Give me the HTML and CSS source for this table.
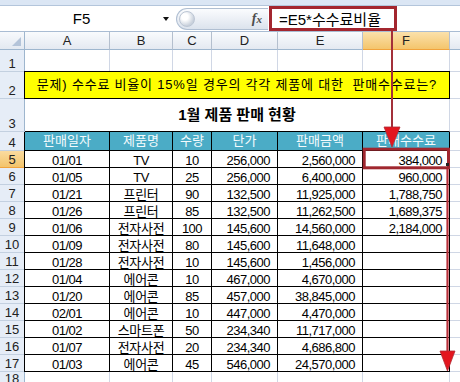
FILE: index.html
```html
<!DOCTYPE html>
<html lang="ko">
<head>
<meta charset="utf-8">
<title>1월 제품 판매 현황</title>
<link rel="stylesheet" href="styles.css">
</head>
<body>
<div class="app">
  <div class="edge"></div>
  <div class="fbar">
    <div class="namebox"><span class="ref">F5</span><span class="dd"></span></div>
    <div class="splitter"><span class="knob"></span><span class="fx"><i>f</i><i class="x">x</i></span></div>
    <div class="finput"><span class="fbox">=E5*수수료비율</span></div>
  </div>
  <div class="sheet">
    <div class="corner"><span class="tri"></span></div>
    <div class="ch">A</div><div class="ch">B</div><div class="ch">C</div><div class="ch">D</div><div class="ch">E</div><div class="ch sel">F</div><div class="ch"></div>

    <div class="rh">1</div><div class="cell"></div><div class="cell"></div><div class="cell"></div><div class="cell"></div><div class="cell"></div><div class="cell"></div><div class="cell"></div>

    <div class="rh">2</div><div class="cell q">문제) 수수료 비율이 15%일 경우의 각각 제품에 대한 &nbsp;판매수수료는?</div><div class="cell"></div>

    <div class="rh">3</div><div class="cell title">1월 제품 판매 현황</div><div class="cell"></div>

    <div class="rh">4</div><div class="cell t hd first">판매일자</div><div class="cell t hd">제품명</div><div class="cell t hd">수량</div><div class="cell t hd">단가</div><div class="cell t hd">판매금액</div><div class="cell t hd">판매수수료</div><div class="cell"></div>

    <div class="rh sel">5</div><div class="cell t c n first">01/01</div><div class="cell t c n">TV</div><div class="cell t c n">10</div><div class="cell t r n">256,000</div><div class="cell t r n">2,560,000</div><div class="cell t r n">384,000</div><div class="cell"></div>
    <div class="rh">6</div><div class="cell t c n first">01/05</div><div class="cell t c n">TV</div><div class="cell t c n">25</div><div class="cell t r n">256,000</div><div class="cell t r n">6,400,000</div><div class="cell t r n">960,000</div><div class="cell"></div>
    <div class="rh">7</div><div class="cell t c n first">01/21</div><div class="cell t c k">프린터</div><div class="cell t c n">90</div><div class="cell t r n">132,500</div><div class="cell t r n">11,925,000</div><div class="cell t r n">1,788,750</div><div class="cell"></div>
    <div class="rh">8</div><div class="cell t c n first">01/26</div><div class="cell t c k">프린터</div><div class="cell t c n">85</div><div class="cell t r n">132,500</div><div class="cell t r n">11,262,500</div><div class="cell t r n">1,689,375</div><div class="cell"></div>
    <div class="rh">9</div><div class="cell t c n first">01/06</div><div class="cell t c k">전자사전</div><div class="cell t c n">100</div><div class="cell t r n">145,600</div><div class="cell t r n">14,560,000</div><div class="cell t r n">2,184,000</div><div class="cell"></div>
    <div class="rh">10</div><div class="cell t c n first">01/09</div><div class="cell t c k">전자사전</div><div class="cell t c n">80</div><div class="cell t r n">145,600</div><div class="cell t r n">11,648,000</div><div class="cell t r n"></div><div class="cell"></div>
    <div class="rh">11</div><div class="cell t c n first">01/28</div><div class="cell t c k">전자사전</div><div class="cell t c n">10</div><div class="cell t r n">145,600</div><div class="cell t r n">1,456,000</div><div class="cell t r n"></div><div class="cell"></div>
    <div class="rh">12</div><div class="cell t c n first">01/04</div><div class="cell t c k">에어콘</div><div class="cell t c n">10</div><div class="cell t r n">467,000</div><div class="cell t r n">4,670,000</div><div class="cell t r n"></div><div class="cell"></div>
    <div class="rh">13</div><div class="cell t c n first">01/20</div><div class="cell t c k">에어콘</div><div class="cell t c n">85</div><div class="cell t r n">457,000</div><div class="cell t r n">38,845,000</div><div class="cell t r n"></div><div class="cell"></div>
    <div class="rh">14</div><div class="cell t c n first">02/01</div><div class="cell t c k">에어콘</div><div class="cell t c n">10</div><div class="cell t r n">447,000</div><div class="cell t r n">4,470,000</div><div class="cell t r n"></div><div class="cell"></div>
    <div class="rh">15</div><div class="cell t c n first">01/02</div><div class="cell t c k">스마트폰</div><div class="cell t c n">50</div><div class="cell t r n">234,340</div><div class="cell t r n">11,717,000</div><div class="cell t r n"></div><div class="cell"></div>
    <div class="rh">16</div><div class="cell t c n first">01/07</div><div class="cell t c k">전자사전</div><div class="cell t c n">20</div><div class="cell t r n">234,340</div><div class="cell t r n">4,686,800</div><div class="cell t r n"></div><div class="cell"></div>
    <div class="rh">17</div><div class="cell t c n first">01/03</div><div class="cell t c k">에어콘</div><div class="cell t c n">45</div><div class="cell t r n">546,000</div><div class="cell t r n">24,570,000</div><div class="cell t r n"></div><div class="cell"></div>

    <div class="rh">18</div><div class="cell"></div><div class="cell"></div><div class="cell"></div><div class="cell"></div><div class="cell"></div><div class="cell"></div><div class="cell"></div>
  </div>

  <svg class="overlay" width="460" height="382" viewBox="0 0 460 382" aria-hidden="true">
    <line x1="392" y1="31" x2="392" y2="129" stroke="#a3303a" stroke-width="2"/>
    <polygon points="384,127 400,127 392,147" fill="#e3161e" stroke="#b02a33" stroke-width="0.8"/>
    <rect x="364.2" y="149.2" width="84.3" height="18.6" fill="none" stroke="#a0272f" stroke-width="3"/>
    <rect x="446" y="163" width="3" height="3" fill="#222"/>
    <line x1="447.5" y1="169" x2="447.5" y2="353" stroke="#b8303a" stroke-width="2.2"/>
    <polygon points="440,351 455,351 447.5,371" fill="#e3161e" stroke="#b02a33" stroke-width="0.8"/>
  </svg>
</div>
</body>
</html>
```

FILE: styles.css
```css
* {
  box-sizing: border-box;
  margin: 0;
  padding: 0;
}

html, body {
  width: 460px;
  height: 382px;
  overflow: hidden;
  background: #ffffff;
}

body {
  font-family: "Liberation Sans", "Noto Sans CJK KR", sans-serif;
  color: #000;
}

.app {
  position: relative;
  width: 460px;
  height: 382px;
  overflow: hidden;
}

.edge {
  height: 6px;
  background: #dbe6f4;
  border-bottom: 1px solid #b3c5db;
}

/* formula bar */
.fbar {
  display: flex;
  height: 26px;
  background: #fff;
  border-bottom: 1px solid #a9bcd3;
}

.namebox {
  width: 173px;
  display: flex;
  align-items: center;
  padding-right: 2px;
}

.ref {
  flex: 1;
  text-align: center;
  font-size: 15px;
  line-height: 15px;
}

.dd {
  width: 0;
  height: 0;
  margin-right: 2px;
  border-left: 3.5px solid transparent;
  border-right: 3.5px solid transparent;
  border-top: 4px solid #111;
}

.splitter {
  width: 92px;
  margin: 2px 0 1px 3px;
  display: flex;
  align-items: center;
  justify-content: space-between;
  border: 1px solid #b0bfd2;
  border-right: 0;
  border-radius: 11px 0 0 11px;
  background: linear-gradient(#fbfcfe, #dce3ed);
}

.knob {
  width: 16px;
  height: 16px;
  margin-left: 2px;
  border-radius: 50%;
  border: 1px solid #bcc6d4;
  background: radial-gradient(circle at 35% 35%, #ffffff 0 25%, #c9d1dc 70%);
}

.fx {
  margin-right: 6px;
  font-family: "Liberation Serif", serif;
  font-style: italic;
  font-weight: bold;
  font-size: 14px;
  color: #4d4d4d;
}

.fx .x {
  font-size: 11px;
}

.finput {
  flex: 1;
  padding-left: 1px;
}

.fbox {
  display: flex;
  align-items: center;
  width: 128px;
  height: 25px;
  padding-left: 7px;
  border: 3px solid #a3262f;
  font-size: 15px;
  white-space: nowrap;
}

/* sheet */
.sheet {
  display: grid;
  grid-template-columns: 25px 85px 63px 39px 66px 85px 87px 1fr;
  grid-template-rows: 18px 22px 27px 33px 19px repeat(13, 17px) 1fr;
  height: 350px;
}

.corner {
  display: flex;
  justify-content: flex-end;
  align-items: flex-end;
  padding: 0 3px 3px 0;
  background: linear-gradient(#f7f9fc, #e3e9f1);
  border-right: 1px solid #9eb6ce;
  border-bottom: 1px solid #9eb6ce;
}

.tri {
  width: 0;
  height: 0;
  border-left: 9px solid transparent;
  border-bottom: 9px solid #b4c4d9;
}

.ch {
  display: flex;
  align-items: center;
  justify-content: center;
  font-size: 13px;
  color: #222;
  background: linear-gradient(#f9fbfd, #e4e9f1);
  border-right: 1px solid #b4bfce;
  border-bottom: 1px solid #9eb6ce;
}

.ch.sel {
  background: linear-gradient(#fbe1ab, #f4c56c);
  border-bottom-color: #f1a33c;
}

.rh {
  display: flex;
  align-items: flex-end;
  justify-content: center;
  font-size: 13px;
  line-height: 13px;
  padding-bottom: 1px;
  color: #222;
  background: #e6edf7;
  border-right: 1px solid #9eb6ce;
  border-bottom: 1px solid #c3d0e0;
}

.rh.sel {
  background: linear-gradient(#fadb9f, #f3c46b);
  border-bottom-color: #f1a33c;
}

.cell {
  display: flex;
  align-items: flex-end;
  padding: 0 7px 0;
  white-space: nowrap;
  font-size: 13px;
  line-height: 12px;
  border-right: 1px solid #d0d7e5;
  border-bottom: 1px solid #d0d7e5;
}

.c { justify-content: center; }
.r { justify-content: flex-end; }
.n { letter-spacing: -0.5px; }
.k { letter-spacing: -0.3px; }

.t {
  border-right-color: #000;
  border-bottom-color: #000;
}

.first {
  box-shadow: -1px 0 0 #000;
}

.hd {
  align-items: center;
  justify-content: center;
  background: #4bacc6;
  color: #f4fbfd;
  font-size: 13px;
  line-height: 14px;
}

.q {
  grid-column: span 6;
  align-items: center;
  justify-content: center;
  background: #ffff00;
  font-size: 13px;
  line-height: 14px;
  letter-spacing: 0.8px;
  border-right-color: #000;
  border-bottom-color: #000;
  box-shadow: 0 -1px 0 #000, -1px 0 0 #000, -1px -1px 0 #000;
}

.title {
  grid-column: span 6;
  align-items: center;
  justify-content: center;
  font-size: 15px;
  line-height: 16px;
  font-weight: bold;
  border-right-color: #d0d7e5;
  border-bottom-color: #000;
}

.overlay {
  position: absolute;
  left: 0;
  top: 0;
  pointer-events: none;
}
```
